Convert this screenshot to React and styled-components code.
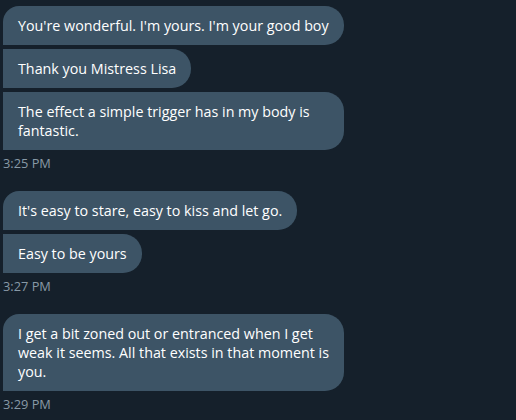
import React from "react";
import styled, { createGlobalStyle } from "styled-components";

const GlobalStyle = createGlobalStyle`
  html, body { margin: 0; padding: 0; background: #15202b; }
  body { font-family: "Open Sans", "Noto Sans", sans-serif; -webkit-font-smoothing: antialiased; }
`;

const Conversation = styled.div`
  display: flex;
  flex-direction: column;
  gap: 19px;
  padding: 6px 0 0 3px;
`;

const Group = styled.div`
  display: flex;
  flex-direction: column;
  align-items: flex-start;
  gap: 4px;
`;

const Bubble = styled.div`
  box-sizing: border-box;
  width: ${(p) => (p.$wide ? "341px" : "auto")};
  max-width: 341px;
  padding: 10px 15px;
  background: #3d5466;
  color: #ffffff;
  font-size: 14.3px;
  line-height: 19px;
  border-radius: ${(p) => (p.$first ? "16px" : "0")} 19px 19px 0;
`;

const Line = styled.span`
  display: block;
  white-space: nowrap;
`;

const Time = styled.div`
  color: #8899a6;
  font-size: 12.8px;
  line-height: 18px;
`;

const groups = [
  {
    time: "3:25 PM",
    messages: [
      ["You're wonderful. I'm yours. I'm your good boy"],
      ["Thank you Mistress Lisa"],
      ["The effect a simple trigger has in my body is", "fantastic."],
    ],
  },
  {
    time: "3:27 PM",
    messages: [["It's easy to stare, easy to kiss and let go."], ["Easy to be yours"]],
  },
  {
    time: "3:29 PM",
    messages: [
      [
        "I get a bit zoned out or entranced when I get",
        "weak it seems. All that exists in that moment is",
        "you.",
      ],
    ],
  },
];

export default function App() {
  return (
    <>
      <GlobalStyle />
      <Conversation>
        {groups.map((g) => (
          <Group key={g.time}>
            {g.messages.map((lines, i) => (
              <Bubble key={i} $first={i === 0} $wide={lines.length > 1}>
                {lines.map((l, j) => (
                  <Line key={j}>{l}</Line>
                ))}
              </Bubble>
            ))}
            <Time>{g.time}</Time>
          </Group>
        ))}
      </Conversation>
    </>
  );
}
